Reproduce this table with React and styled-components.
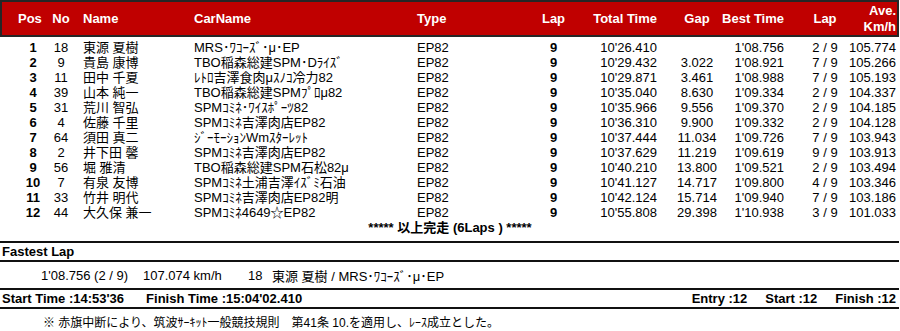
import React from 'react';
import styled, { createGlobalStyle } from 'styled-components';

const Global = createGlobalStyle`
  html, body { margin: 0; padding: 0; background: #fff; }
  body {
    font-family: "Liberation Sans", Arial, "Noto Sans CJK JP", sans-serif;
    color: #000;
    font-size: 13px;
  }
`;

const TAIL = '22px 122px 223px 113px 47px 98px 44px 86px 40px 51px';

const Page = styled.div`
  width: 900px;
  height: 331px;
  overflow: hidden;
`;

const HeaderBox = styled.div`
  width: 899px;
  height: 37px;
  box-sizing: border-box;
  background: #c00000;
  border: 2px solid #262626;
  display: grid;
  grid-template-columns: 48px ${TAIL};
  align-items: center;
  color: #fff;
  font-weight: bold;
  white-space: nowrap;
`;

const HeadCell = styled.div`
  text-align: ${(p) => p.$align || 'left'};
  padding-left: ${(p) => p.$pl || 0}px;
  padding-right: ${(p) => p.$pr || 0}px;
  line-height: 16px;
`;

const Body = styled.div`
  margin-top: 3px;
`;

const Row = styled.div`
  display: grid;
  grid-template-columns: 50px ${TAIL};
  height: 15px;
  line-height: 15px;
  white-space: nowrap;
`;

const Cell = styled.div`
  text-align: ${(p) => p.$align || 'left'};
  padding-left: ${(p) => p.$pl || 0}px;
  padding-right: ${(p) => p.$pr || 0}px;
  font-weight: ${(p) => (p.$bold ? 'bold' : 'normal')};
`;

const Finished = styled.div`
  height: 15px;
  line-height: 15px;
  text-align: center;
  font-weight: bold;
  margin-bottom: 6px;
`;

const Band = styled.div`
  width: 899px;
  border-top: 2px solid #111;
  box-sizing: content-box;
`;

const FastHead = styled(Band)`
  height: 17px;
  line-height: 17px;
  padding-left: 2px;
  width: 897px;
  font-weight: bold;
`;

const FastData = styled(Band)`
  height: 26px;
  display: grid;
  grid-template-columns: 41px 102px 105px 24px 1fr;
  align-items: center;
  white-space: nowrap;
`;

const StartRow = styled(Band)`
  height: 17px;
  line-height: 17px;
  border-bottom: 2px solid #111;
  display: flex;
  justify-content: space-between;
  font-weight: bold;
  white-space: nowrap;
  padding: 0 3px 0 2px;
  width: 894px;
`;

const Group = styled.div`
  display: flex;
  gap: ${(p) => p.$gap}px;
`;

const Note = styled.div`
  margin-top: 7px;
  padding-left: 43px;
  font-size: 12px;
  line-height: 14px;
  white-space: nowrap;
`;

const rows = [
  [1, 18, '東源 夏樹', 'MRS･ﾜｺｰｽﾞ･μ･EP', '10\'26.410', '', '1\'08.756', '2 / 9', '105.774'],
  [2, 9, '貴島 康博', 'TBO稲森総建SPM･Dﾗｲｽﾞ', '10\'29.432', '3.022', '1\'08.921', '7 / 9', '105.266'],
  [3, 11, '田中 千夏', 'ﾚﾄﾛ吉澤食肉μｽﾉｺ冷力82', '10\'29.871', '3.461', '1\'08.988', '7 / 9', '105.193'],
  [4, 39, '山本 純一', 'TBO稲森総建SPMﾌﾟﾛμ82', '10\'35.040', '8.630', '1\'09.334', '2 / 9', '104.337'],
  [5, 31, '荒川 智弘', 'SPMｺﾐﾈ･ﾜｲｽﾎﾟｰﾂ82', '10\'35.966', '9.556', '1\'09.370', '2 / 9', '104.185'],
  [6, 4, '佐藤 千里', 'SPMｺﾐﾈ吉澤肉店EP82', '10\'36.310', '9.900', '1\'09.332', '2 / 9', '104.128'],
  [7, 64, '須田 真二', 'ｼﾞｰﾓｰｼｮﾝWmｽﾀｰﾚｯﾄ', '10\'37.444', '11.034', '1\'09.726', '7 / 9', '103.943'],
  [8, 2, '井下田 馨', 'SPMｺﾐﾈ吉澤肉店EP82', '10\'37.629', '11.219', '1\'09.619', '9 / 9', '103.913'],
  [9, 56, '堀  雅清', 'TBO稲森総建SPM石松82μ', '10\'40.210', '13.800', '1\'09.521', '2 / 9', '103.494'],
  [10, 7, '有泉 友博', 'SPMｺﾐﾈ土浦吉澤ｲｽﾞﾐ石油', '10\'41.127', '14.717', '1\'09.800', '4 / 9', '103.346'],
  [11, 33, '竹井 明代', 'SPMｺﾐﾈ吉澤肉店EP82明', '10\'42.124', '15.714', '1\'09.940', '7 / 9', '103.186'],
  [12, 44, '大久保 兼一', 'SPMｺﾐﾈ4649☆EP82', '10\'55.808', '29.398', '1\'10.938', '3 / 9', '101.033'],
];

export default function App() {
  return (
    <Page>
      <Global />
      <HeaderBox>
        <HeadCell $pl={16}>Pos</HeadCell>
        <HeadCell $align="center">No</HeadCell>
        <HeadCell $pl={11}>Name</HeadCell>
        <HeadCell>CarName</HeadCell>
        <HeadCell>Type</HeadCell>
        <HeadCell $align="center">Lap</HeadCell>
        <HeadCell $align="right" $pr={18}>Total Time</HeadCell>
        <HeadCell $align="center">Gap</HeadCell>
        <HeadCell $align="right" $pr={21}>Best Time</HeadCell>
        <HeadCell $align="center">Lap</HeadCell>
        <HeadCell $align="right">
          Ave.
          <br />
          Km/h
        </HeadCell>
      </HeaderBox>
      <Body>
        {rows.map((r) => (
          <Row key={r[0]}>
            <Cell $align="center" $pl={16} $bold>{r[0]}</Cell>
            <Cell $align="center">{r[1]}</Cell>
            <Cell $pl={11}>{r[2]}</Cell>
            <Cell>{r[3]}</Cell>
            <Cell>EP82</Cell>
            <Cell $align="center" $bold>9</Cell>
            <Cell $align="right" $pr={18}>{r[4]}</Cell>
            <Cell $align="center">{r[5]}</Cell>
            <Cell $align="right" $pr={21}>{r[6]}</Cell>
            <Cell $align="center">{r[7]}</Cell>
            <Cell $align="right">{r[8]}</Cell>
          </Row>
        ))}
        <Finished>***** 以上完走 (6Laps ) *****</Finished>
      </Body>
      <FastHead>Fastest Lap</FastHead>
      <FastData>
        <span />
        <span>1'08.756 (2 / 9)</span>
        <span>107.074 km/h</span>
        <span>18</span>
        <span>東源 夏樹 / MRS･ﾜｺｰｽﾞ･μ･EP</span>
      </FastData>
      <StartRow>
        <Group $gap={22}>
          <span>Start Time :14:53'36</span>
          <span>Finish Time :15:04'02.410</span>
        </Group>
        <Group $gap={18}>
          <span>Entry :12</span>
          <span>Start :12</span>
          <span>Finish :12</span>
        </Group>
      </StartRow>
      <Note>※ 赤旗中断により、筑波ｻｰｷｯﾄ一般競技規則　第41条 10.を適用し、ﾚｰｽ成立とした。</Note>
    </Page>
  );
}
